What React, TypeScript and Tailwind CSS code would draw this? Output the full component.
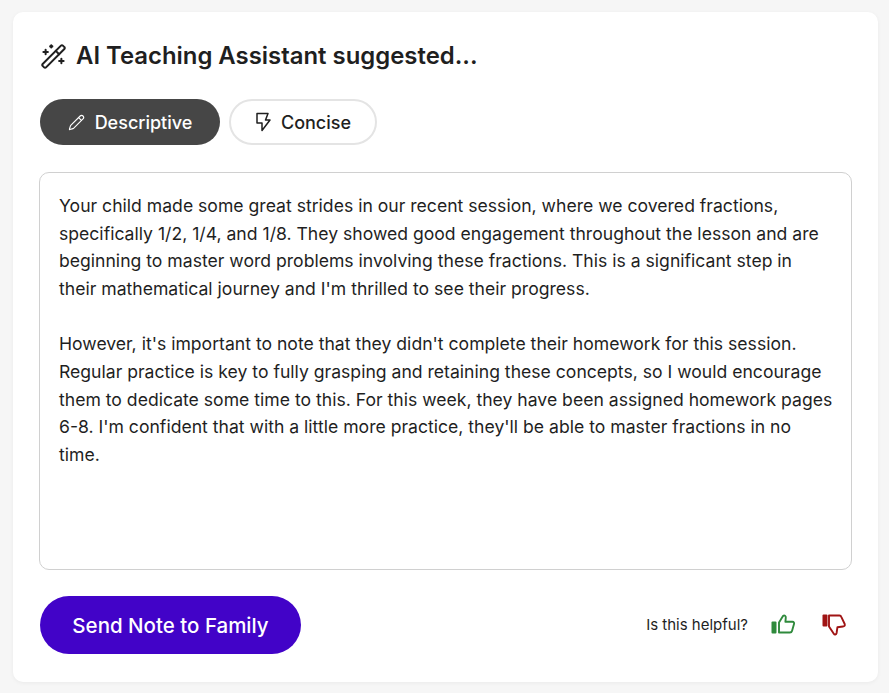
import { Pencil, WandSparkles } from 'lucide-react';

const paragraphOne = [
  'Your child made some great strides in our recent session, where we covered fractions,',
  'specifically 1/2, 1/4, and 1/8. They showed good engagement throughout the lesson and are',
  'beginning to master word problems involving these fractions. This is a significant step in',
  "their mathematical journey and I'm thrilled to see their progress.",
];

const paragraphTwo = [
  "However, it's important to note that they didn't complete their homework for this session.",
  'Regular practice is key to fully grasping and retaining these concepts, so I would encourage',
  'them to dedicate some time to this. For this week, they have been assigned homework pages',
  "6-8. I'm confident that with a little more practice, they'll be able to master fractions in no",
  'time.',
];

function Bolt() {
  return (
    <svg viewBox="0 0 16 20" className="h-[20px] w-[16px]" fill="none" stroke="currentColor" strokeWidth={1.5} strokeLinejoin="round">
      <path d="M2 1.5H13L10.5 8H15L7 18.5V11H2Z" />
    </svg>
  );
}

function ThumbUp() {
  return (
    <svg viewBox="0 0 27 24" className="h-[24px] w-[27px] text-[#2f8a3c]" fill="none">
      <rect x="2.5" y="8.5" width="5" height="12" rx="1" fill="currentColor" />
      <path
        d="M10 19.5V9.5L14 3C15.5 1.8 17 3 16.8 4.5L16.4 8.8H23.5C24.8 8.8 25.4 9.8 25 11L23 18C22.7 19 22 19.5 21 19.5Z"
        stroke="currentColor"
        strokeWidth={1.9}
        strokeLinejoin="round"
      />
    </svg>
  );
}

function ThumbDown() {
  return (
    <svg viewBox="0 0 26 24" className="h-[24px] w-[26px] text-[#a01414]" fill="none">
      <rect x="1.5" y="1.5" width="5" height="12" rx="1" fill="currentColor" />
      <path
        d="M8 2.5H18.5C19.5 2.5 20 3 20.3 3.8L23.7 11C24.2 12.4 23.5 13.5 22 13.5L16.4 14.3L15.6 20C15.2 21.8 13.6 22 12.8 20.8L8 13.5Z"
        stroke="currentColor"
        strokeWidth={1.9}
        strokeLinejoin="round"
      />
    </svg>
  );
}

export default function App() {
  return (
    <div className="h-[693px] w-[889px] overflow-hidden bg-[#f6f6f6] px-[13px] pt-[12px] font-['Inter',sans-serif] text-[#1f1f1f]">
      <div className="h-[670px] w-[865px] rounded-[10px] bg-white px-[26px] pt-[29px] shadow-[0_1px_4px_rgba(0,0,0,0.05)]">
        {/* Title */}
        <div className="flex h-[30px] items-center gap-[9px] pl-[1px]">
          <WandSparkles className="h-[27px] w-[27px]" strokeWidth={1.8} />
          <h1 className="whitespace-nowrap text-[23.9px] font-semibold leading-none">AI Teaching Assistant suggested...</h1>
        </div>

        {/* Style tabs */}
        <div className="mt-[28px] flex gap-[9px] pl-[1px]">
          <button className="flex h-[46px] w-[180px] items-center justify-center gap-[10px] rounded-full bg-[#464646] text-[18px] font-medium text-white">
            <Pencil className="h-[17px] w-[17px]" strokeWidth={1.6} />
            Descriptive
          </button>
          <button className="flex h-[46px] w-[148px] items-center justify-center gap-[10px] rounded-full border-2 border-[#e4e4e4] bg-white text-[18px] font-medium">
            <Bolt />
            Concise
          </button>
        </div>

        {/* Note body */}
        <div className="mt-[27px] h-[398px] rounded-[10px] border border-[#d0d0d0] px-[19px] pt-[19px] text-[17.6px] leading-[27.67px]">
          {paragraphOne.map((line) => (
            <div key={line} className="whitespace-nowrap">{line}</div>
          ))}
          <div className="h-[27.67px]" />
          {paragraphTwo.map((line) => (
            <div key={line} className="whitespace-nowrap">{line}</div>
          ))}
        </div>

        {/* Footer */}
        <div className="mt-[26px] flex items-center justify-between pl-[1px]">
          <button className="h-[58px] w-[261px] rounded-full bg-[#4203c8] pt-[3px] text-[20.5px] font-medium text-white">
            Send Note to Family
          </button>
          <div className="flex items-center pr-[5px]">
            <span className="text-[15px]">Is this helpful?</span>
            <span className="ml-[21px]"><ThumbUp /></span>
            <span className="ml-[25px]"><ThumbDown /></span>
          </div>
        </div>
      </div>
    </div>
  );
}
